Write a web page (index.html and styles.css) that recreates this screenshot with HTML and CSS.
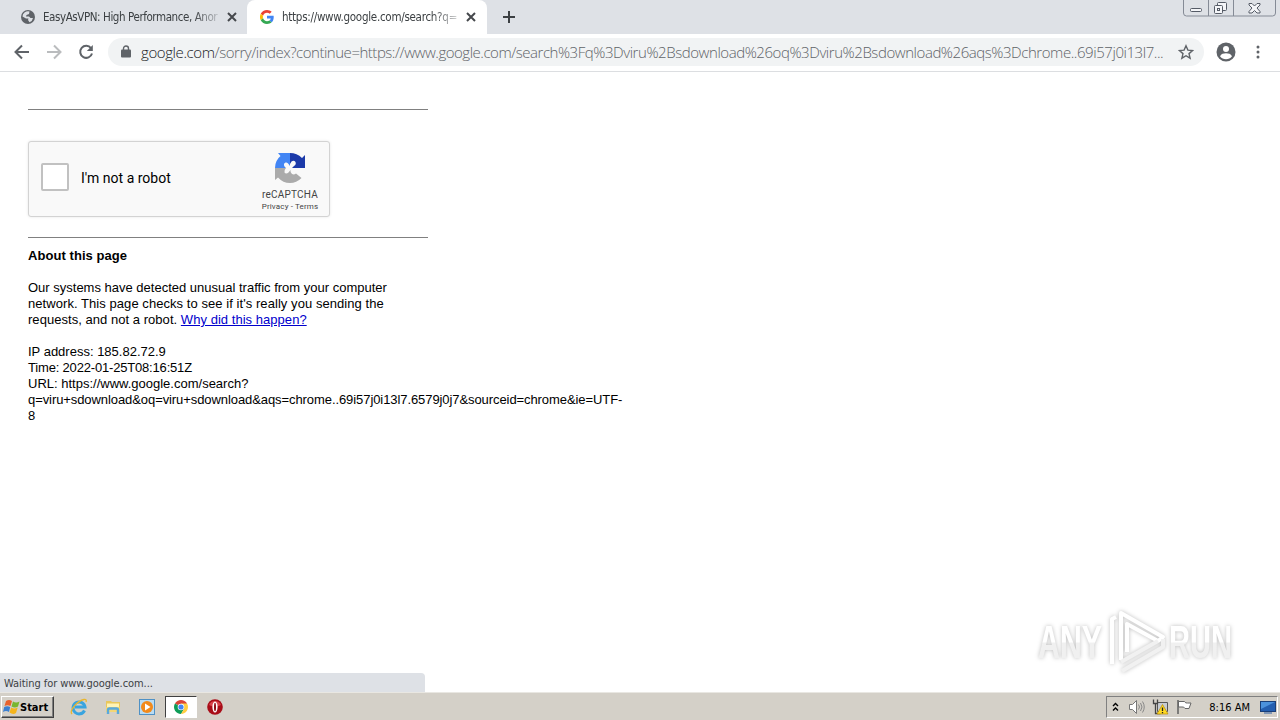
FILE: index.html
```html
<!DOCTYPE html>
<html lang="en">
<head>
<meta charset="UTF-8">
<title>https://www.google.com/search?q=viru+sdownload</title>
<link rel="stylesheet" href="styles.css">
</head>
<body>

<div class="tabstrip">
    <div class="tab">
        <svg class="favicon" width="14" height="14" viewBox="0 0 14 14">
            <circle cx="7" cy="7" r="7" fill="#5f6368"/>
            <path d="M3.500 2.500Q6 .8 8.500 1.500L8 4 5.500 5 5 6.500H8L9.500 8H12q-.5 3-3.500 4.300L7 10 7.500 8.500 5 8.500 1.500 6.500Q1.500 4 3.500 2.500z" fill="#dee1e6"/>
        </svg>
        <span class="tab-title first">EasyAsVPN: High Performance, Anor</span>
        <svg class="close" width="10" height="10" viewBox="0 0 10 10"><path d="M1 1l8 8M9 1L1 9"/></svg>
    </div>
    <div class="tab active">
        <svg class="favicon" width="14" height="14" viewBox="0 0 48 48">
            <path fill="#ea4335" d="M24 9.500c3.540 0 6.710 1.220 9.210 3.600l6.850-6.850C35.900 2.380 30.470 0 24 0 14.620 0 6.510 5.380 2.560 13.220l7.980 6.190C12.430 13.720 17.740 9.500 24 9.500z"/>
            <path fill="#4285f4" d="M46.980 24.550c0-1.570-.15-3.090-.38-4.550H24v9.020h12.940c-.58 2.960-2.260 5.480-4.780 7.180l7.730 6c4.510-4.180 7.090-10.360 7.090-17.650z"/>
            <path fill="#fbbc05" d="M10.530 28.590a14.500 14.500 0 0 1 0-9.180l-7.980-6.190a24 24 0 0 0 0 21.560z"/>
            <path fill="#34a853" d="M24 48c6.480 0 11.930-2.130 15.890-5.810l-7.730-6c-2.150 1.450-4.920 2.300-8.160 2.300-6.260 0-11.570-4.220-13.470-9.910l-7.980 6.190C6.510 42.620 14.620 48 24 48z"/>
        </svg>
        <span class="tab-title second">https://www.google.com/search?q=</span>
        <svg class="close" width="10" height="10" viewBox="0 0 10 10"><path d="M1 1l8 8M9 1L1 9"/></svg>
    </div>
    <svg class="new-tab" width="12" height="12" viewBox="0 0 12 12"><path d="M6 0v12M0 6h12"/></svg>
    <svg class="window-buttons" width="94" height="18" viewBox="0 0 94 18">
        <path d="M.5-1v14q0 3 3 3h86q3 0 3-3V-1M25.500 0v16M50.500 0v16" fill="none" stroke="#858b96"/>
        <g fill="#f4f5f8" stroke="#555b66">
            <rect x="7.500" y="8.500" width="11" height="3" rx="1"/>
            <rect x="34.500" y="2.500" width="9" height="8" rx="1"/>
            <rect x="31.500" y="5.500" width="8" height="8" rx="1"/>
            <rect x="34.500" y="8.500" width="2" height="2"/>
            <path d="M66 3.500h3l2.500 2.500L74 3.500h3v1.500L74 8l3 3.500V13h-3l-2.500-2.500L69 13h-3v-1.500L69 8l-3-3z"/>
        </g>
    </svg>
</div>

<div class="toolbar">
    <svg class="nav" width="16" height="16" viewBox="0 0 16 16"><path d="M15 8H2M8 1.500L1.500 8 8 14.500"/></svg>
    <svg class="nav forward" width="16" height="16" viewBox="0 0 16 16"><path d="M1 8h13M8 1.500L14.500 8 8 14.500"/></svg>
    <svg class="nav" width="16" height="16" viewBox="0 0 16 16"><path d="M13 4.200A6 6 0 1 0 14 9.500"/><path d="M14.800 1v6h-6z" fill="#5f6368" stroke="none"/></svg>
    <div class="omnibox">
        <svg class="lock" width="10" height="13" viewBox="0 0 10 13">
            <path d="M2.500 5V3.500a2.500 2.500 0 0 1 5 0V5" fill="none" stroke="#5f6368" stroke-width="1.400"/>
            <rect y="4.500" width="10" height="8" rx="1" fill="#5f6368"/>
        </svg>
        <span class="url"><span class="host">google.com</span><span class="path">/sorry/index?continue=https://www.google.com/search</span><span class="query">%3Fq%3Dviru%2Bsdownload%26oq%3Dviru%2Bsdownload%26aqs%3Dchrome..69i57j0i13l7...</span></span>
        <svg class="star" width="16" height="16" viewBox="0 0 16 16"><path d="M8 1.800l1.900 4.300 4.700.4-3.600 3.100 1.100 4.600L8 11.700l-4.100 2.500L5 9.600 1.400 6.500l4.700-.4z"/></svg>
    </div>
    <svg class="avatar" width="20" height="20" viewBox="0 0 20 20">
        <circle cx="10" cy="10" r="9.500" fill="#5f6368"/>
        <circle cx="10" cy="7" r="3" fill="#fff"/>
        <path d="M4 14.200c1.200-2.400 3.500-3 6-3s4.800.6 6 3a7.300 7.300 0 0 1-12 0z" fill="#fff"/>
    </svg>
    <svg class="menu" width="4" height="14" viewBox="0 0 4 14" fill="#5f6368">
        <circle cx="2" cy="2" r="1.500"/><circle cx="2" cy="7" r="1.500"/><circle cx="2" cy="12" r="1.500"/>
    </svg>
</div>

<div class="page">
    <hr>
    <div class="captcha">
        <div class="checkbox"></div>
        <div class="captcha-label">I'm not a robot</div>
        <div class="captcha-brand">
            <svg width="32" height="32" viewBox="0 0 64 64">
                <path fill="#1c3aa9" d="M62 32V6l-6 6Q46 2 32 2v22l3-5q5-3 8 1 2 5-3 8l-4 4z"/>
                <path fill="#4285f4" d="M32 2H8l5 6Q2 17 2 32h22l-3-3q-3-6 2-8 4-1 6 3l3 4z"/>
                <path fill="#ababab" d="M2 32v24l6-5q10 11 24 11 13 0 23-10l-11-9q-4 3-8 1-4-3-3-8l-4 5q-5 4-8 0-1-5 3-9z"/>
            </svg>
            <div class="brand-name">reCAPTCHA</div>
            <div class="brand-links">Privacy - Terms</div>
        </div>
    </div>
    <hr>
    <div class="info">
        <b class="heading">About this page</b><br><br>
        <span class="line1">Our systems have detected unusual traffic from your computer</span><br>
        <span class="line2">network. This page checks to see if it's really you sending the</span><br>
        <span class="line3">requests, and not a robot. <a href="#">Why did this happen?</a></span><br><br>
        <span class="line4">IP address: 185.82.72.9</span><br>
        <span class="line5">Time: 2022-01-25T08:16:51Z</span><br>
        <span class="line6">URL: https://www.google.com/search?</span><br>
        <span class="line7">q=viru+sdownload&amp;oq=viru+sdownload&amp;aqs=chrome..69i57j0i13l7.6579j0j7&amp;sourceid=chrome&amp;ie=UTF-</span><br>
        8
    </div>

    <svg class="watermark" width="240" height="70" viewBox="0 0 240 70">
        <defs>
            <linearGradient id="fade" x1="0" y1="0" x2="0" y2="1">
                <stop offset=".5" stop-color="#fff"/>
                <stop offset=".52" stop-color="#f0f0f0"/>
            </linearGradient>
        </defs>
        <g fill="url(#fade)">
            <text x="8" y="52" textLength="64" lengthAdjust="spacingAndGlyphs">ANY</text>
            <text x="139" y="52" textLength="63" lengthAdjust="spacingAndGlyphs">RUN</text>
        </g>
        <g fill="none" stroke="#fff" stroke-width="4" stroke-linejoin="round">
            <path d="M82 58V13l4-2"/>
            <path d="M91 54V7l42 24-5 4-31-17v28"/>
            <path d="M91 56l37-21M92 65l41-24v-8" stroke="#f1f1f1"/>
        </g>
    </svg>
    <div class="status">Waiting for www.google.com...</div>
</div>

<div class="taskbar">
    <div class="start">
        <svg width="17" height="16" viewBox="0 0 17 16">
            <path d="M3 2q3-2 6 0L7.500 7q-3-1.500-6 0z" fill="#e8622c"/>
            <path d="M10 2.500q3 2 6.500 0L15 7.500q-3 2-6.500 0z" fill="#79b62f"/>
            <path d="M1.200 8q3-1.500 6 0L6 13q-3-2-6 0z" fill="#3b7fd0"/>
            <path d="M8.200 8.500q3 2 6.500 0L13 14q-3 2-6.500-.5z" fill="#f5b51c"/>
        </svg>
        <b>Start</b>
    </div>
    <div class="task">
        <svg width="18" height="18" viewBox="0 0 18 18">
            <path d="M14.500 12.500A6 6 0 1 1 15 9H5" fill="none" stroke="#39a4df" stroke-width="3"/>
            <path d="M2 16C-1 13 7 3 14 1.500q3-.5 2 2.500" fill="none" stroke="#e9b62f" stroke-width="1.300"/>
        </svg>
    </div>
    <div class="task">
        <svg width="16" height="16" viewBox="0 0 16 16">
            <path d="M1 2h5l1 1h8v10H1z" fill="#e9c75c"/>
            <path d="M2 4.500h12V9H2z" fill="#fff3b5"/>
            <path d="M1 8h14v5H1z" fill="#f3d675"/>
            <path d="M3 15v-4q0-1.500 1.500-1.500h7Q13 9.500 13 11v4" fill="none" stroke="#58a9dc" stroke-width="2.400"/>
        </svg>
    </div>
    <div class="task">
        <svg width="16" height="16" viewBox="0 0 16 16">
            <rect x=".5" y=".5" width="15" height="15" fill="#b9dcf3" stroke="#4f91c5"/>
            <circle cx="8" cy="8" r="6" fill="#f28a1b"/>
            <path d="M6 4.500v7L11.500 8z" fill="#fff"/>
        </svg>
    </div>
    <div class="task pressed">
        <svg width="14" height="14" viewBox="0 0 14 14">
            <path d="M7 7L.94 3.500a7 7 0 0 1 12.120 0z" fill="#db4437"/>
            <path d="M7 7L.94 3.500A7 7 0 0 0 7 14l3-5z" fill="#0f9d58"/>
            <path d="M7 7L7 3.500h6.060A7 7 0 0 1 7 14l3-5z" fill="#ffcd40"/>
            <circle cx="7" cy="7" r="3.300" fill="#fff"/>
            <circle cx="7" cy="7" r="2.600" fill="#4285f4"/>
        </svg>
    </div>
    <div class="task">
        <svg width="16" height="16" viewBox="0 0 16 16">
            <circle cx="8" cy="8" r="7.800" fill="#a90d18"/>
            <path d="M2 6a6.500 6.500 0 0 1 12 0q-6 3-12 0z" fill="#d9434b"/>
            <ellipse cx="8" cy="8" rx="2.600" ry="5.500" fill="#fff"/>
            <ellipse cx="8" cy="8" rx="1" ry="4.300" fill="#8c0912"/>
        </svg>
    </div>
    <div class="tray">
        <svg width="7" height="10" viewBox="0 0 7 10"><path d="M1 4l2.500-2.500L6 4M1 8.500L3.500 6 6 8.500" fill="none" stroke="#000" stroke-width="1.400"/></svg>
        <svg class="speaker" width="17" height="16" viewBox="0 0 17 16">
            <path d="M1.500 5.500h3l4-4v13l-4-4h-3z" fill="#fff" stroke="#777"/>
            <path d="M10.500 5.500q2 2.500 0 5M12.500 4q3 4 0 8M14.500 2.500q3.500 5.500 0 11" fill="none" stroke="#888"/>
        </svg>
        <svg class="network" width="17" height="16" viewBox="0 0 17 16">
            <path d="M5.500 3.500h10v9h-10z" fill="#c8ccd2" stroke="#555"/>
            <path d="M1.500.5v4h4v-4M3.500 5v9.500h5" fill="none" stroke="#444" stroke-width="1.300"/>
            <path d="M10.500 5.500L16 15H5z" fill="#ffda22" stroke="#b98b00" stroke-width=".7"/>
            <path d="M10.500 8.500v3.500M10.500 13v1.200" stroke="#222" stroke-width="1.300"/>
        </svg>
        <svg class="flag" width="16" height="16" viewBox="0 0 16 16">
            <path d="M2.500 2.500h6q1 2 3 1.500h3.500l-2 5.500h-4q-1-2-3-1.500H2.500z" fill="#fff" stroke="#666"/>
            <path d="M2 1v14" stroke="#666" stroke-width="1.600"/>
        </svg>
        <span class="clock">8:16 AM</span>
        <svg width="16" height="14" viewBox="0 0 16 14">
            <rect x=".5" y="1.500" width="15" height="10" fill="#245fb0" stroke="#1a3f78"/>
            <path d="M1 2h14L1 9z" fill="#4c92dc"/>
            <path d="M4 13h8" stroke="#8197b5" stroke-width="2"/>
        </svg>
    </div>
</div>

</body>
</html>
```
FILE: styles.css
```css
* {
    box-sizing: border-box;
}

body {
    margin: 0;
    height: 720px;
    display: flex;
    flex-direction: column;
    overflow: hidden;
    background: #fff;
    color: #000;
    font-family: "Liberation Sans", Arial, sans-serif;
    font-size: 13px;
}

svg {
    display: block;
    flex: none;
}

/* tabs */
.tabstrip {
    height: 34px;
    display: flex;
    background: #dee1e6;
}

.tab {
    width: 247px;
    display: flex;
    align-items: center;
    padding: 0 10px 0 21px;
    font: 11.5px "DejaVu Sans Condensed", "DejaVu Sans", sans-serif;
    color: #3c4043;
}

.tab.active {
    width: 240px;
    padding: 0 11px 0 13px;
    background: #fff;
    border-radius: 8px 8px 0 0;
}

.tab-title {
    width: 176px;
    margin-left: 8px;
    overflow: hidden;
    white-space: nowrap;
    -webkit-mask-image: linear-gradient(to right, #000 85%, rgba(0, 0, 0, .2));
    mask-image: linear-gradient(to right, #000 85%, rgba(0, 0, 0, .2));
}

.tab-title.first {
    letter-spacing: -.42px;
}

.tab-title.second {
    letter-spacing: -.27px;
}

.close {
    margin-left: auto;
    stroke: #45484c;
    stroke-width: 2;
}

.new-tab {
    margin: 11px 0 0 16px;
    stroke: #3c4043;
    stroke-width: 2;
}

.window-buttons {
    margin-left: auto;
    margin-right: 3px;
}

/* address bar */
.toolbar {
    height: 38px;
    display: flex;
    align-items: center;
    padding: 0 20px 2px 14px;
    border-bottom: 1px solid #dcdee1;
}

.nav {
    margin-right: 16px;
    fill: none;
    stroke: #5f6368;
    stroke-width: 2;
}

.nav.forward {
    stroke: #babcbe;
}

.omnibox {
    width: 1096px;
    height: 28px;
    margin-left: -2px;
    padding: 0 10px 0 13px;
    display: flex;
    align-items: center;
    border-radius: 14px;
    background: #f1f3f4;
}

.url {
    width: 1026px;
    margin-left: 10px;
    font: 300 15px "Open Sans", sans-serif;
    white-space: nowrap;
    color: #5f6368;
}

.host {
    letter-spacing: -.4px;
    color: #202124;
}

.path {
    letter-spacing: -.48px;
}

.query {
    letter-spacing: -.44px;
}

.star {
    margin-left: auto;
    fill: none;
    stroke: #5f6368;
    stroke-width: 1.4;
}

.avatar {
    margin-left: 12px;
}

.menu {
    margin-left: auto;
}

/* page */
.page {
    flex: 1;
    position: relative;
    padding: 37px 28px 0;
}

hr {
    width: 400px;
    height: 1px;
    margin: 0;
    border: 0;
    background: #808080;
}

.captcha {
    width: 302px;
    height: 76px;
    margin: 31px 0 20px;
    padding: 0 9px 0 12px;
    display: flex;
    align-items: center;
    background: #f9f9f9;
    border: 1px solid #d3d3d3;
    border-radius: 3px;
    box-shadow: 0 0 3px rgba(0, 0, 0, .1);
}

.checkbox {
    width: 28px;
    height: 28px;
    margin-top: -4px;
    background: #fff;
    border: 2px solid #c1c1c1;
    border-radius: 2px;
}

.captcha-label {
    margin: -2px 0 0 12px;
    font: 14px Roboto, sans-serif;
}

.captcha-brand {
    width: 60px;
    margin: 7px 0 0 auto;
    display: flex;
    flex-direction: column;
    align-items: center;
    font-family: Roboto, sans-serif;
    color: #444;
}

.brand-name {
    margin-top: 4px;
    font-size: 10px;
    line-height: 13px;
    letter-spacing: .2px;
}

.brand-links {
    font-size: 8px;
    line-height: 12px;
    letter-spacing: .15px;
}

.info {
    margin-top: 10px;
    line-height: 16px;
    white-space: nowrap;
}

.info a {
    color: #0000cc;
}

.heading,
.line2 {
    letter-spacing: .06px;
}

.line3 {
    letter-spacing: .04px;
}

.line5 {
    letter-spacing: -.18px;
}

.line7 {
    letter-spacing: -.08px;
}

/* loading bubble and watermark lie over the page */
.status {
    position: absolute;
    left: 0;
    bottom: 0;
    width: 425px;
    height: 19px;
    padding-left: 4px;
    background: #dee1e6;
    border-top-right-radius: 4px;
    font: 11px/21px "DejaVu Sans Condensed", "DejaVu Sans", sans-serif;
    letter-spacing: -.06px;
    color: #3c4043;
}

.watermark {
    position: absolute;
    right: 10px;
    bottom: 16px;
    font: 700 46px "Liberation Sans", sans-serif;
    filter: drop-shadow(0 0 2px rgba(0, 0, 0, .26));
}

/* taskbar */
.taskbar {
    height: 28px;
    display: flex;
    align-items: center;
    padding: 1px 2px 0 1px;
    background: #d4d0c8;
    border-top: 1px solid #e9e7e2;
}

.start {
    width: 53px;
    height: 22px;
    margin-right: 9px;
    padding-left: 1px;
    display: flex;
    align-items: center;
    border: 1px solid;
    border-color: #fff #404040 #404040 #fff;
    box-shadow: inset -1px -1px #808080;
    font: 11px "DejaVu Sans Condensed", sans-serif;
}

.task {
    width: 32px;
    height: 22px;
    margin-right: 2px;
    display: flex;
    align-items: center;
    justify-content: center;
}

.task.pressed {
    background: #fff;
    border: 1px solid;
    border-color: #404040 #fff #fff #404040;
}

.tray {
    width: 172px;
    height: 22px;
    margin-left: auto;
    padding: 0 1px 0 5px;
    display: flex;
    align-items: center;
    border: 1px solid;
    border-color: #808080 #fff #fff #808080;
}

.speaker {
    margin-left: 9px;
}

.network {
    margin-left: 7px;
}

.flag {
    margin-left: 7px;
}

.clock {
    margin: 0 10px 0 auto;
    font: 11px "DejaVu Sans Condensed", sans-serif;
}
```
